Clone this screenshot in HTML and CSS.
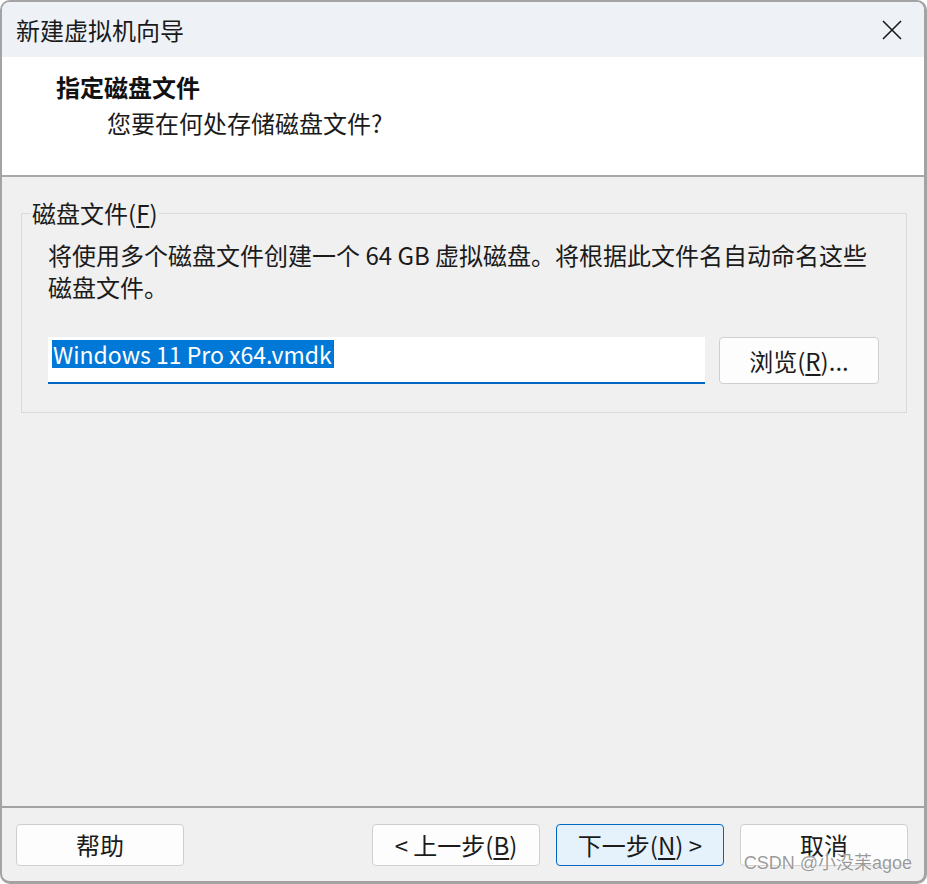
FILE: index.html
```html
<!DOCTYPE html>
<html lang="zh-CN">
<head>
<meta charset="utf-8">
<title>新建虚拟机向导</title>
<link rel="stylesheet" href="styles.css">
</head>
<body>
<div class="window">
  <div class="titlebar">
    <span class="title">新建虚拟机向导</span>
    <svg class="close" width="20" height="20" viewBox="0 0 20 20"><path d="M1 1 L19 19 M19 1 L1 19" stroke="#1a1a1a" stroke-width="1.6" fill="none"/></svg>
  </div>
  <div class="header">
    <div class="heading">指定磁盘文件</div>
    <div class="subheading">您要在何处存储磁盘文件?</div>
  </div>
  <div class="body">
    <fieldset class="group">
      <legend class="legend">磁盘文件(<u>F</u>)</legend>
      <div class="group-inner">
        <p class="desc">将使用多个磁盘文件创建一个 64 GB 虚拟磁盘。将根据此文件名自动命名这些磁盘文件。</p>
        <div class="file-row">
          <div class="input"><span class="sel">Windows 11 Pro x64.vmdk</span><span class="caret"></span></div>
          <button class="btn browse">浏览(<u>R</u>)...</button>
        </div>
      </div>
    </fieldset>
  </div>
  <div class="footer">
    <button class="btn">帮助</button>
    <div class="spacer"></div>
    <button class="btn">&lt; 上一步(<u>B</u>)</button>
    <button class="btn primary">下一步(<u>N</u>) &gt;</button>
    <button class="btn">取消</button>
  </div>
  <div class="watermark">CSDN @小没苿agoe</div>
</div>
</body>
</html>
```

FILE: styles.css
```css
* { box-sizing: border-box; }
html, body { margin: 0; padding: 0; background: #ffffff; }
body {
  font-family: "Noto Sans CJK SC", "Noto Sans", sans-serif;
  color: #1b1b1b;
}
.window {
  position: relative;
  width: 927px;
  height: 884px;
  border-style: solid;
  border-color: #a3a3a3;
  border-width: 2px 3px 3px 2px;
  border-radius: 10px;
  overflow: hidden;
  display: flex;
  flex-direction: column;
  background: #f0f0f0;
}
.titlebar {
  height: 55px;
  background: #eef2f7;
  display: flex;
  align-items: center;
  justify-content: space-between;
  padding: 0 22px 0 14px;
  flex-shrink: 0;
}
.title {
  font-size: 24px;
  line-height: 32px;
  color: #1a1a1a;
  margin-top: 1px;
}
.close { display: block; margin-top: 1px; }
.header {
  background: #ffffff;
  height: 120px;
  border-bottom: 2px solid #a8a8a8;
  padding: 12px 0 0 54px;
  flex-shrink: 0;
}
.heading {
  font-size: 24px;
  line-height: 36px;
  font-weight: 600;
  color: #111;
}
.subheading {
  font-size: 24px;
  line-height: 36px;
  padding-left: 51px;
  color: #1b1b1b;
}
.body {
  flex: 1;
  padding: 20px 17px 0 19px;
}
.group {
  margin: 0;
  padding: 0;
  border: 1px solid #dadada;
  min-width: 0;
}
.legend {
  margin-left: 9px;
  padding: 0 1px;
  font-size: 24px;
  line-height: 32px;
  color: #1b1b1b;
}
.group-inner {
  padding: 10px 27px 28px 26px;
}
.desc {
  margin: 0;
  font-size: 24px;
  line-height: 32px;
  color: #1b1b1b;
}
.file-row {
  margin-top: 34px;
  display: flex;
  gap: 14px;
  height: 47px;
}
.input {
  flex: 1;
  background: #ffffff;
  border-bottom: 2px solid #0067c0;
  padding: 3px 0 0 4px;
  display: flex;
  align-items: flex-start;
}
.sel {
  background: #0078d7;
  color: #ffffff;
  font-size: 23px;
  line-height: 28px;
  height: 28px;
  padding: 0 1px;
}
.caret {
  width: 1px;
  height: 28px;
  background: #9a4b00;
}
.btn {
  font-family: "Noto Sans CJK SC", "Noto Sans", sans-serif;
  font-size: 24px;
  line-height: 30px;
  color: #1b1b1b;
  background: #fdfdfd;
  border: 1px solid #cfcfcf;
  border-radius: 4px;
  padding: 0;
  width: 168px;
  height: 42px;
  display: flex;
  align-items: center;
  justify-content: center;
}
.browse {
  width: 160px;
  height: 47px;
}
.primary {
  background: #e5f1fb;
  border-color: #0067c0;
}
u { text-underline-offset: 3px; }
.footer {
  border-top: 2px solid #a3a3a3;
  height: 75px;
  padding: 16px 16px 0 14px;
  display: flex;
  gap: 16px;
  flex-shrink: 0;
}
.spacer { flex: 1; }
.watermark {
  position: absolute;
  right: 12px;
  bottom: 6px;
  font-family: "Liberation Sans", "Noto Sans CJK SC", sans-serif;
  font-size: 18px;
  line-height: 24px;
  color: rgba(120, 120, 120, 0.75);
  text-shadow: 0 0 2px #ffffff, 0 0 1px #ffffff;
}
```
